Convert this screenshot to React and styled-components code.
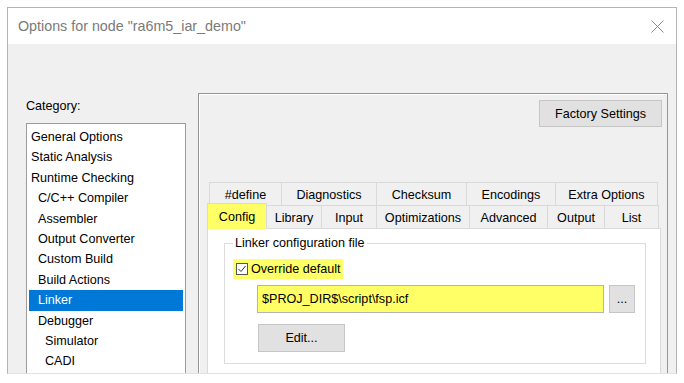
import React from 'react';
import styled, { createGlobalStyle } from 'styled-components';

// -- Data
const categories = [
  { label: 'General Options', level: 0 },
  { label: 'Static Analysis', level: 0 },
  { label: 'Runtime Checking', level: 0 },
  { label: 'C/C++ Compiler', level: 1 },
  { label: 'Assembler', level: 1 },
  { label: 'Output Converter', level: 1 },
  { label: 'Custom Build', level: 1 },
  { label: 'Build Actions', level: 1 },
  { label: 'Linker', level: 1, selected: true },
  { label: 'Debugger', level: 1 },
  { label: 'Simulator', level: 2 },
  { label: 'CADI', level: 2 },
];

const backTabs = [
  { label: '#define', width: 73 },
  { label: 'Diagnostics', width: 95 },
  { label: 'Checksum', width: 90 },
  { label: 'Encodings', width: 89 },
  { label: 'Extra Options', width: 102 },
];

const frontTabs = [
  { label: 'Config', width: 58, selected: true },
  { label: 'Library', width: 55 },
  { label: 'Input', width: 55 },
  { label: 'Optimizations', width: 93 },
  { label: 'Advanced', width: 78 },
  { label: 'Output', width: 57 },
  { label: 'List', width: 54 },
];

// -- Component
function CloseIcon() {
  return (
    <svg width="13" height="13" viewBox="0 0 13 13">
      <path d="M0.5 0.5 L12.5 12.5 M12.5 0.5 L0.5 12.5" stroke="#8a8a8a" strokeWidth="1" fill="none" />
    </svg>
  );
}

function CheckMark() {
  return (
    <svg width="10" height="10" viewBox="0 0 10 10">
      <path d="M1.5 5 L4 7.5 L8.5 2" stroke="#333" strokeWidth="1" fill="none" />
    </svg>
  );
}

export default function App() {
  return (
    <Page>
      <GlobalStyle />
      <Window>
        <TitleBar>
          <Title>Options for node &quot;ra6m5_iar_demo&quot;</Title>
          <CloseIcon />
        </TitleBar>
        <Body>
          <CategoryColumn>
            <Label>Category:</Label>
            <ListBox>
              {categories.map((item) => (
                <ListItem key={item.label} level={item.level} selected={item.selected}>
                  {item.label}
                </ListItem>
              ))}
            </ListBox>
          </CategoryColumn>
          <Frame>
            <Button width={123}>Factory Settings</Button>
            <TabStrip>
              <TabRow>
                {backTabs.map((tab) => (
                  <Tab key={tab.label} width={tab.width}>
                    {tab.label}
                  </Tab>
                ))}
              </TabRow>
              <TabRow>
                {frontTabs.map((tab) => (
                  <Tab key={tab.label} width={tab.width} selected={tab.selected}>
                    {tab.label}
                  </Tab>
                ))}
              </TabRow>
            </TabStrip>
            <TabPanel>
              <GroupBox>
                <Legend>Linker configuration file</Legend>
                <CheckRow>
                  <CheckBox>
                    <CheckMark />
                  </CheckBox>
                  Override default
                </CheckRow>
                <InputRow>
                  <PathInput>$PROJ_DIR$\script\fsp.icf</PathInput>
                  <Button width={26}>...</Button>
                </InputRow>
                <EditRow>
                  <Button width={87}>Edit...</Button>
                </EditRow>
              </GroupBox>
            </TabPanel>
          </Frame>
        </Body>
      </Window>
    </Page>
  );
}

// -- Styles
const GlobalStyle = createGlobalStyle`
  html, body {
    margin: 0;
    background: #ffffff;
  }

  body {
    font-family: "Liberation Sans", Arial, sans-serif;
    font-size: 12.6px;
    color: #000;
  }
`;

const Page = styled.div`
  padding: 7px 0 0 7px;
`;

const Window = styled.div`
  display: flex;
  flex-direction: column;
  box-sizing: border-box;

  width: 670px;
  height: 367px;

  border: 1px solid #b4b4b4;
  border-bottom-color: #e2e2e2;
  overflow: hidden;
`;

const TitleBar = styled.div`
  display: flex;
  align-items: center;
  justify-content: space-between;

  height: 36px;
  padding: 0 12px 0 10px;

  background: #ffffff;
`;

const Title = styled.span`
  font-size: 14.3px;
  color: #7a7a7a;
`;

const Body = styled.div`
  display: flex;
  flex: 1;
  gap: 12px;

  padding: 49px 8px 0 18px;

  background: #f0f0f0;
`;

const CategoryColumn = styled.div`
  display: flex;
  flex-direction: column;

  width: 160px;
  padding-top: 6px;
`;

const Label = styled.div`
  line-height: 15px;
  margin-bottom: 9px;
`;

const ListBox = styled.div`
  flex: 1;
  box-sizing: border-box;
  padding: 3px 2px 0;

  background: #ffffff;
  border: 1px solid #9c9c9c;
  border-bottom: none;
`;

const ListItem = styled.div`
  height: 20.4px;
  line-height: 20.4px;
  padding-left: ${({ level }) => 2 + level * 7}px;

  white-space: nowrap;
  color: ${({ selected }) => (selected ? '#ffffff' : '#000000')};
  background: ${({ selected }) => (selected ? '#0078d7' : 'transparent')};
`;

const Frame = styled.div`
  display: flex;
  flex-direction: column;
  flex: 1;
  box-sizing: border-box;

  padding: 6px 6px 0 8px;

  border: 1px solid #959595;
  border-bottom: none;
  box-shadow: inset 1px 1px 0 #ffffff;
`;

const Button = styled.div`
  display: flex;
  align-items: center;
  justify-content: center;
  box-sizing: border-box;
  flex-shrink: 0;

  width: ${({ width }) => width}px;
  height: 28px;

  background: #e1e1e1;
  border: 1px solid #c6c6c6;

  ${Frame} > & {
    align-self: flex-end;
    height: 27px;
    margin-right: -1px;
  }
`;

const TabStrip = styled.div`
  display: flex;
  flex-direction: column;

  margin-top: 55px;
  padding: 0 2px;
`;

const TabRow = styled.div`
  display: flex;
  height: 23px;
`;

const Tab = styled.div`
  display: flex;
  align-items: center;
  justify-content: center;
  box-sizing: border-box;
  position: relative;

  width: ${({ width, selected }) => (selected ? width + 2 : width)}px;
  height: ${({ selected }) => (selected ? 26 : 23)}px;
  margin: ${({ selected }) => (selected ? '-2px 0 -1px -2px' : '0')};
  padding-top: ${({ selected }) => (selected ? 0 : 1)}px;

  white-space: nowrap;
  background: ${({ selected }) => (selected ? '#ffff66' : '#f0f0f0')};
  border-top: 1px solid #d9d9d9;
  border-right: 1px solid #d9d9d9;
  z-index: ${({ selected }) => (selected ? 1 : 0)};

  &:first-child {
    border-left: 1px solid #d9d9d9;
  }
`;

const TabPanel = styled.div`
  flex: 1;
  padding: 6px 14px 0 16px;

  background: #ffffff;
  border: 1px solid #d9d9d9;
  border-bottom: none;
`;

const GroupBox = styled.fieldset`
  min-width: 0;
  margin: 0;
  padding: 0 0 11px 8px;

  border: 1px solid #dcdcdc;
`;

const Legend = styled.legend`
  padding: 0 2px;
  line-height: 16px;
`;

const CheckRow = styled.div`
  display: flex;
  align-items: center;
  gap: 3px;

  width: fit-content;
  height: 20px;
  margin-top: 8px;
  padding: 0 2px 0 3px;

  background: #ffff66;
`;

const CheckBox = styled.span`
  display: flex;
  align-items: center;
  justify-content: center;
  box-sizing: border-box;

  width: 12px;
  height: 12px;

  background: #ffffff;
  border: 1px solid #555555;
`;

const InputRow = styled.div`
  display: flex;
  gap: 5px;

  margin-top: 6px;
  margin-left: 24px;
`;

const PathInput = styled.div`
  display: flex;
  align-items: center;
  box-sizing: border-box;

  width: 347px;
  height: 28px;
  padding-left: 4px;

  background: #ffff66;
  border: 1px solid #b4b4b4;
`;

const EditRow = styled.div`
  margin-top: 11px;
  margin-left: 25px;
`;
